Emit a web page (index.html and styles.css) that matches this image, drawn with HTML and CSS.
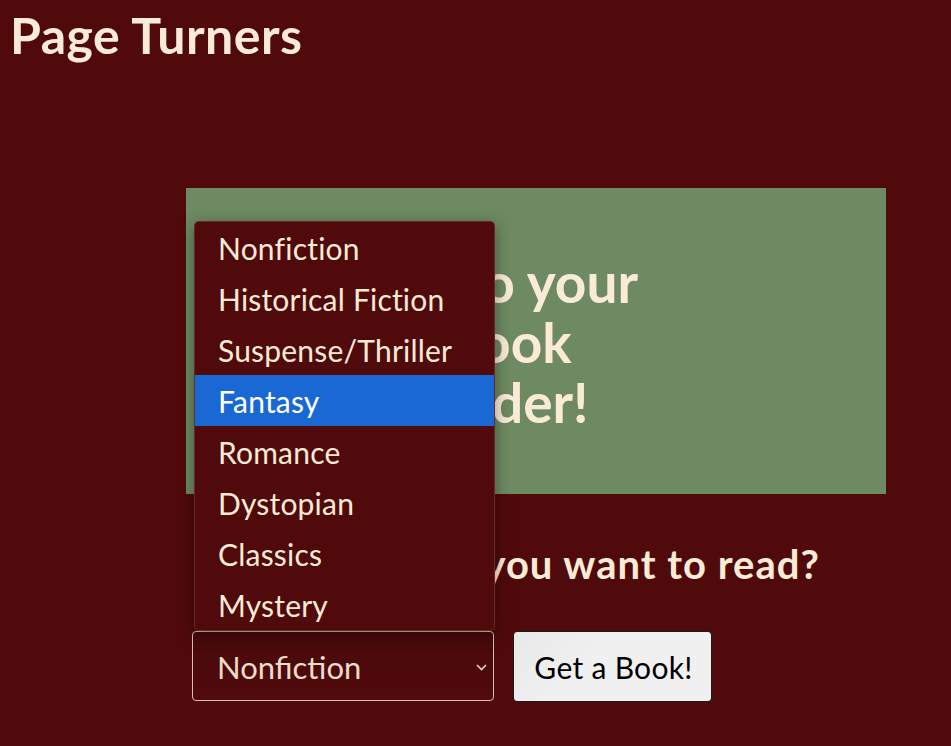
FILE: index.html
```html
<!DOCTYPE html>
<html lang="en">
<head>
<meta charset="utf-8">
<title>Page Turners</title>
<link rel="stylesheet" href="styles.css">
</head>
<body>
<header class="site-header">
  <h1 class="brand">Page Turners</h1>
</header>
<main class="main">
  <section class="hero">
    <h2 class="hero-title">Welcome to your Personal Book Recommender!</h2>
  </section>
  <h3 class="question">What genre do you want to read?</h3>
  <form class="picker">
    <div class="select-wrap">
      <select class="genre-select">
        <option>Nonfiction</option>
        <option>Historical Fiction</option>
        <option>Suspense/Thriller</option>
        <option>Fantasy</option>
        <option>Romance</option>
        <option>Dystopian</option>
        <option>Classics</option>
        <option>Mystery</option>
      </select>
      <svg class="chevron" width="11" height="7" viewBox="0 0 11 7"><path d="M1 1 L5.5 5.5 L10 1" fill="none" stroke="#e6d3c1" stroke-width="1.6"/></svg>
      <ul class="menu">
        <li class="menu-item">Nonfiction</li>
        <li class="menu-item">Historical Fiction</li>
        <li class="menu-item">Suspense/Thriller</li>
        <li class="menu-item is-active">Fantasy</li>
        <li class="menu-item">Romance</li>
        <li class="menu-item">Dystopian</li>
        <li class="menu-item">Classics</li>
        <li class="menu-item">Mystery</li>
      </ul>
    </div>
    <button type="button" class="get-btn">Get a Book!</button>
  </form>
</main>
</body>
</html>
```

FILE: styles.css
```css
* { box-sizing: border-box; }

html, body {
  margin: 0;
  background: #500a0b;
  font-family: "Lato", "Open Sans", sans-serif;
  color: #faebd7;
}

body { height: 746px; overflow: hidden; }

.site-header {
  padding: 6px 0 0 10px;
}

.brand {
  margin: 0;
  font-size: 50px;
  line-height: 58px;
  letter-spacing: 0.5px;
  font-weight: 700;
  color: #faebd7;
}

.main {
  margin: 124px 0 0 186px;
  width: 700px;
}

.hero {
  height: 306px;
  background: #6d8a62;
  padding: 64px 0 0 33px;
}

.hero-title {
  margin: 0;
  width: 480px;
  font-size: 55px;
  line-height: 60px;
  font-weight: 700;
  color: #faebd7;
}

.question {
  margin: 47px 0 0 11px;
  font-size: 40px;
  line-height: 47px;
  letter-spacing: 1px;
  font-weight: 700;
  color: #faebd7;
}

.picker {
  display: flex;
  gap: 19px;
  margin: 43px 0 0 6px;
}

.select-wrap {
  position: relative;
  width: 302px;
  height: 70px;
}

.genre-select {
  appearance: none;
  -webkit-appearance: none;
  width: 100%;
  height: 100%;
  margin: 0;
  padding: 2px 0 0 24px;
  border: 1px solid #d4c0b0;
  border-radius: 4px;
  background: linear-gradient(#470a0b, #520a0c);
  color: #eddcca;
  font-family: "Lato", "Open Sans", sans-serif;
  font-size: 31px;
  outline: none;
}

.chevron {
  position: absolute;
  right: 7px;
  top: 33px;
  pointer-events: none;
}

.menu {
  position: absolute;
  left: 2px;
  bottom: 100%;
  width: 301px;
  margin: 0;
  padding: 0;
  list-style: none;
  background: #500a0b;
  border: 1px solid rgba(255, 235, 215, 0.14);
  border-radius: 5px;
  overflow: hidden;
  box-shadow: 0 4px 16px rgba(0, 0, 0, 0.4);
  z-index: 2;
}

.menu-item {
  height: 51px;
  line-height: 53px;
  padding-left: 23px;
  font-size: 30px;
  letter-spacing: 0.2px;
  color: #faebd7;
}

.menu-item.is-active {
  background: #1a68d4;
  color: #ffffff;
}

.get-btn {
  width: 199px;
  height: 71px;
  margin: 0;
  padding: 0 0 0 2px;
  border: 1px solid #1a1a1a;
  border-radius: 4px;
  background: linear-gradient(135deg, #e9e9e9, #f0f0f0 40%);
  color: #000;
  font-family: "Lato", "Open Sans", sans-serif;
  font-size: 30px;
  letter-spacing: 0.3px;
}
```
